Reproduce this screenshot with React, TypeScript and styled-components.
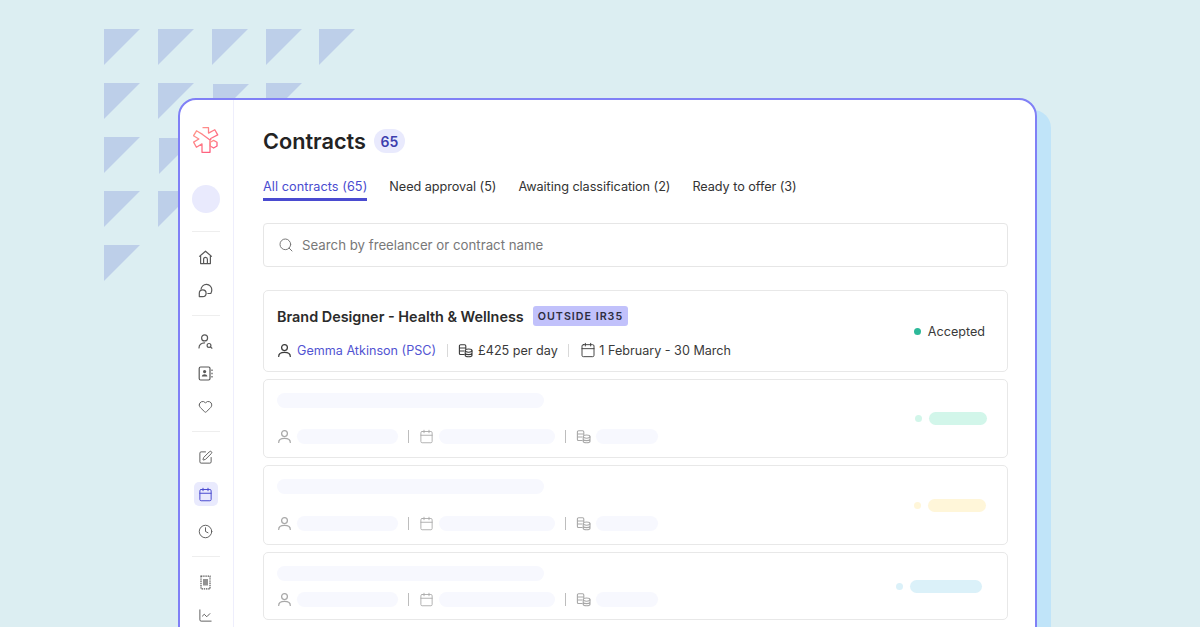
import React from 'react';
import styled, { createGlobalStyle } from 'styled-components';
import { Calendar, Clock, Heart, Search, SquarePen, ChartLine } from 'lucide-react';

const GlobalStyle = createGlobalStyle`
  html, body {
    margin: 0;
    padding: 0;
    background: #dceef2;
    font-family: Inter, "Liberation Sans", sans-serif;
  }
`;

const Page = styled.div`
  position: relative;
  width: 1200px;
  height: 627px;
  overflow: hidden;
  background: #dceef2;
  padding: 98px 0 0 178px;
  box-sizing: border-box;
`;

const Triangle = styled.div<{ $x: number; $y: number }>`
  position: absolute;
  left: ${(p) => p.$x}px;
  top: ${(p) => p.$y}px;
  width: 36px;
  height: 36px;
  background: #bdcfe9;
  clip-path: polygon(0 0, 100% 0, 0 100%);
`;

const Frame = styled.div`
  position: relative;
  display: flex;
  width: 859px;
  height: 600px;
  box-sizing: border-box;
  background: #fff;
  border: 2px solid #8080f6;
  border-radius: 18px;
  box-shadow: 14px 12px 0 #c0e4f9;
`;

const Sidebar = styled.aside`
  width: 54px;
  flex: none;
  box-sizing: border-box;
  border-right: 1px solid #eeeefc;
  display: flex;
  flex-direction: column;
  align-items: center;
  padding: 27px 2px 0 0;
`;

const LogoSlot = styled.div`
  height: 26px;
  margin-bottom: 32px;
  line-height: 0;
`;

const Avatar = styled.div`
  width: 28px;
  height: 28px;
  border-radius: 50%;
  background: #e9eafd;
  margin-bottom: 18px;
`;

const Divider = styled.div`
  width: 28px;
  height: 1px;
  background: #eeeeee;
  flex: none;
`;

const NavGroup = styled.div<{ $gap: number }>`
  display: flex;
  flex-direction: column;
  align-items: center;
  padding: 13px 0 13px;
  gap: ${(p) => p.$gap}px;
`;

const NavItem = styled.div<{ $active?: boolean }>`
  width: 24px;
  height: 24px;
  display: flex;
  align-items: center;
  justify-content: center;
  border-radius: 5px;
  color: ${(p) => (p.$active ? '#4a4bd0' : '#595959')};
  background: ${(p) => (p.$active ? '#e9eafd' : 'transparent')};
`;

const Main = styled.main`
  flex: 1;
  min-width: 0;
  padding: 29px 27px 0 29px;
`;

const Heading = styled.div`
  display: flex;
  align-items: center;
  gap: 8px;
  height: 24px;
`;

const Title = styled.h1`
  margin: 0;
  font-size: 21.7px;
  font-weight: 600;
  color: #232323;
  line-height: 24px;
`;

const CountBadge = styled.span`
  width: 31px;
  height: 24px;
  display: flex;
  align-items: center;
  justify-content: center;
  border-radius: 12px;
  background: #e9eafd;
  color: #3d3eae;
  font-size: 14px;
  font-weight: 600;
`;

const Tabs = styled.nav`
  display: flex;
  gap: 22px;
  margin-top: 23px;
`;

const Tab = styled.div<{ $active?: boolean }>`
  font-size: 12.7px;
  line-height: 20px;
  height: 25px;
  box-sizing: border-box;
  letter-spacing: ${(p) => (p.$active ? '0.06px' : '-0.06px')};
  color: ${(p) => (p.$active ? '#4a4bd0' : '#333')};
  padding: 1px 0;
  border-bottom: 3px solid ${(p) => (p.$active ? '#4a4bd0' : 'transparent')};
`;

const SearchBox = styled.div`
  display: flex;
  align-items: center;
  gap: 8px;
  height: 44px;
  box-sizing: border-box;
  margin-top: 22px;
  padding-left: 14px;
  border: 1px solid #e6e6e6;
  border-radius: 4px;
  color: #787878;
  font-size: 13.25px;
`;

const Cards = styled.div`
  display: flex;
  flex-direction: column;
  gap: 7px;
  margin-top: 23px;
`;

const Card = styled.article<{ $height: number }>`
  display: flex;
  align-items: center;
  justify-content: space-between;
  height: ${(p) => p.$height}px;
  box-sizing: border-box;
  border: 1px solid #e8e8e8;
  border-radius: 5px;
  padding: 0 13px;
`;

const CardBody = styled.div<{ $gap: number; $shift?: number }>`
  display: flex;
  flex-direction: column;
  gap: ${(p) => p.$gap}px;
  margin-top: ${(p) => p.$shift ?? 0}px;
`;

const TitleRow = styled.div`
  display: flex;
  align-items: center;
  gap: 9px;
  height: 20px;
`;

const CardTitle = styled.h2`
  margin: 0;
  font-size: 14.4px;
  font-weight: 600;
  color: #2b2b2b;
`;

const Ir35 = styled.span`
  display: flex;
  align-items: center;
  height: 20px;
  padding: 0 5px;
  border-radius: 3px;
  background: #c1c1fb;
  color: #2d2d40;
  font-size: 10.7px;
  font-weight: 600;
  letter-spacing: 1px;
`;

const Meta = styled.div`
  display: flex;
  align-items: center;
  height: 16px;
  font-size: 12.6px;
  color: #3a3a3a;
`;

const MetaItem = styled.span<{ $link?: boolean; $gap?: number }>`
  display: flex;
  align-items: center;
  gap: ${(p) => p.$gap ?? 5}px;
  color: ${(p) => (p.$link ? '#5254d2' : 'inherit')};
`;

const InkIcon = styled.span`
  display: flex;
  color: #3a3a3a;
`;

const Sep = styled.span<{ $ghost?: boolean }>`
  width: 1px;
  height: 13px;
  margin: 0 ${(p) => (p.$ghost ? 10 : 10.5)}px;
  background: ${(p) => (p.$ghost ? '#bdbdbd' : '#d9d9d9')};
`;

const GhostIcon = styled.span`
  display: flex;
  color: #a8a8a8;
`;

const Bone = styled.div<{ $w: number; $h?: number; $c?: string }>`
  width: ${(p) => p.$w}px;
  height: ${(p) => p.$h ?? 15}px;
  border-radius: 8px;
  background: ${(p) => p.$c ?? '#f7f8fe'};
`;

const Status = styled.div<{ $inset?: number }>`
  display: flex;
  align-items: center;
  gap: 7px;
  margin-right: ${(p) => p.$inset ?? 0}px;
  font-size: 12.6px;
  color: #3a3a3a;
`;

const Dot = styled.span<{ $c: string }>`
  width: 7px;
  height: 7px;
  border-radius: 50%;
  background: ${(p) => p.$c};
`;

const Logo = () => (
  <svg width="26" height="26" viewBox="0 0 26 26" fill="none">
    <defs>
      <linearGradient id="logoGrad" x1="0" y1="0" x2="1" y2="1">
        <stop offset="0" stopColor="#ff9f8e" />
        <stop offset="1" stopColor="#ff4f7b" />
      </linearGradient>
    </defs>
    <path
      d="M9.5 .7h6v5.4l6.3-3.4 2.9 5.2-7 3.6v1.4M17 13v12.3H9v-8.4l-5.6 3.3-2.8-5.1 5.3-3.1-5.4-3.2 3-5 6 3.6z"
      stroke="url(#logoGrad)"
      strokeWidth="1.3"
      strokeLinejoin="round"
    />
    <path d="M20.6 13.4l3.4 1.9v3.7l-3.4 2-3.4-2v-3.7z" stroke="url(#logoGrad)" strokeWidth="1.3" strokeLinejoin="round" />
  </svg>
);

const HomeIcon = () => (
  <svg width="15" height="15" viewBox="0 0 15 15" fill="none" stroke="currentColor" strokeWidth="1.2" strokeLinejoin="round">
    <path d="M1.2 6.6 7.5 1.2l6.3 5.4" />
    <path d="M2.6 5.6V13.6h9.8V5.6" />
    <path d="M5.6 13.6V9.2a1.9 1.9 0 0 1 3.8 0v4.4" />
  </svg>
);

const ChatBubbles = () => (
  <svg width="15" height="15" viewBox="0 0 15 15" fill="none" stroke="currentColor" strokeWidth="1.2" strokeLinejoin="round">
    <path d="M3 6.6A5.4 5.4 0 0 1 13.8 7c0 1.3-.4 2.4-1 3.5H9.4" />
    <path d="M1.3 13.6v-3.4a3.4 3.4 0 1 1 3.4 3.4z" />
  </svg>
);

const PersonSearch = () => (
  <svg width="15" height="15" viewBox="0 0 15 15" fill="none" stroke="currentColor" strokeWidth="1.2" strokeLinecap="round">
    <circle cx="6.6" cy="3.9" r="3" />
    <path d="M1 14c0-3.2 2.4-5.2 5.6-5.2" />
    <circle cx="11" cy="11.4" r="1.9" />
    <path d="M12.5 12.9l1.4 1.3" />
  </svg>
);

const AddressBook = () => (
  <svg width="15" height="15" viewBox="0 0 15 15" fill="none" stroke="currentColor" strokeWidth="1.2" strokeLinejoin="round">
    <rect x="1.2" y="1" width="10.8" height="13" rx="1.4" />
    <circle cx="6.6" cy="5.6" r="1.6" fill="currentColor" stroke="none" />
    <path d="M3.8 10.6c.2-1.6 1.4-2.4 2.8-2.4s2.6.8 2.8 2.4z" fill="currentColor" stroke="none" />
    <path d="M14 3.4v1.6M14 6.7v1.6M14 10v1.6" />
  </svg>
);

const Receipt = () => (
  <svg width="15" height="15" viewBox="0 0 15 15" fill="none" stroke="currentColor" strokeWidth="1.2">
    <path d="M3 1.2h9v12.6H3z" strokeDasharray="1.4 0.8" />
    <rect x="5" y="4" width="5" height="6.5" fill="currentColor" opacity="0.65" stroke="none" />
  </svg>
);

const Coins = () => (
  <svg width="15" height="15" viewBox="0 0 15 15" fill="none" stroke="currentColor" strokeWidth="1.1" strokeLinejoin="round">
    <path d="M6.6 11.5H2.4c-.6 0-1-.4-1-1V3c0-.8.6-1.2 1.2-1.2h4c.7 0 1.2.5 1.2 1.2v3" />
    <path d="M1.4 5h6.4M1.4 8h4.6" />
    <ellipse cx="10.6" cy="7.6" rx="3.4" ry="1.6" />
    <path d="M7.2 7.6v4.6c0 .9 1.5 1.6 3.4 1.6s3.4-.7 3.4-1.6V7.6M7.2 10c0 .9 1.5 1.6 3.4 1.6s3.4-.7 3.4-1.6" />
  </svg>
);

const Person = () => (
  <svg width="15" height="15" viewBox="0 0 15 15" fill="none" stroke="currentColor" strokeWidth="1.25" strokeLinecap="round">
    <circle cx="7.5" cy="4.6" r="2.9" />
    <path d="M1.7 13.4c0-2.8 2.4-4 5.8-4s5.8 1.2 5.8 4" />
  </svg>
);

const triangles = [
  [104, 29], [158, 29], [212, 29], [266, 29], [319, 29],
  [104, 83], [158, 83], [213, 84], [266, 83],
  [104, 137], [159, 138],
  [104, 191], [158, 191],
  [104, 245],
];

const navGroups = [
  { gap: 9, items: [{ icon: <HomeIcon /> }, { icon: <ChatBubbles /> }] },
  {
    gap: 8.5,
    items: [
      { icon: <PersonSearch /> },
      { icon: <AddressBook /> },
      { icon: <Heart size={15} strokeWidth={1.5} /> },
    ],
  },
  {
    gap: 13,
    items: [
      { icon: <SquarePen size={15} strokeWidth={1.5} /> },
      { icon: <Calendar size={15} strokeWidth={1.6} />, active: true },
      { icon: <Clock size={15} strokeWidth={1.5} /> },
    ],
  },
  { gap: 9, items: [{ icon: <Receipt /> }, { icon: <ChartLine size={15} strokeWidth={1.5} /> }] },
];

const skeletons = [
  { height: 79, gap: 21, shift: 0, color: '#d2f6ea', width: 58, inset: 7 },
  { height: 80, gap: 21, shift: 0, color: '#fff6d9', width: 58, inset: 8 },
  { height: 68, gap: 10, shift: 1, color: '#dbf1f9', width: 72, inset: 12 },
];

export default function App() {
  return (
    <Page>
      <GlobalStyle />
      {triangles.map(([x, y]) => (
        <Triangle key={`${x}-${y}`} $x={x} $y={y} />
      ))}
      <Frame>
        <Sidebar>
          <LogoSlot>
            <Logo />
          </LogoSlot>
          <Avatar />
          {navGroups.map((group, i) => (
            <React.Fragment key={i}>
              <Divider />
              <NavGroup $gap={group.gap}>
                {group.items.map((item, j) => (
                  <NavItem key={j} $active={item.active}>
                    {item.icon}
                  </NavItem>
                ))}
              </NavGroup>
            </React.Fragment>
          ))}
        </Sidebar>
        <Main>
          <Heading>
            <Title>Contracts</Title>
            <CountBadge>65</CountBadge>
          </Heading>
          <Tabs>
            <Tab $active>All contracts (65)</Tab>
            <Tab>Need approval (5)</Tab>
            <Tab>Awaiting classification (2)</Tab>
            <Tab>Ready to offer (3)</Tab>
          </Tabs>
          <SearchBox>
            <Search size={16} strokeWidth={1.5} />
            Search by freelancer or contract name
          </SearchBox>
          <Cards>
            <Card $height={82}>
              <CardBody $gap={16} $shift={2}>
                <TitleRow>
                  <CardTitle>Brand Designer - Health &amp; Wellness</CardTitle>
                  <Ir35>OUTSIDE IR35</Ir35>
                </TitleRow>
                <Meta>
                  <MetaItem $link>
                    <InkIcon>
                      <Person />
                    </InkIcon>
                    Gemma Atkinson (PSC)
                  </MetaItem>
                  <Sep />
                  <MetaItem>
                    <Coins />
                    £425 per day
                  </MetaItem>
                  <Sep />
                  <MetaItem $gap={3.5}>
                    <Calendar size={16} strokeWidth={1.4} />1 February - 30 March
                  </MetaItem>
                </Meta>
              </CardBody>
              <Status $inset={9}>
                <Dot $c="#2db999" />
                Accepted
              </Status>
            </Card>
            {skeletons.map((s, i) => (
              <Card key={i} $height={s.height}>
                <CardBody $gap={s.gap} $shift={s.shift}>
                  <Bone $w={267} />
                  <Meta>
                    <MetaItem>
                      <GhostIcon>
                        <Person />
                      </GhostIcon>
                      <Bone $w={101} />
                    </MetaItem>
                    <Sep $ghost />
                    <MetaItem>
                      <GhostIcon>
                        <Calendar size={15} strokeWidth={1.4} />
                      </GhostIcon>
                      <Bone $w={116} />
                    </MetaItem>
                    <Sep $ghost />
                    <MetaItem>
                      <GhostIcon>
                        <Coins />
                      </GhostIcon>
                      <Bone $w={62} />
                    </MetaItem>
                  </Meta>
                </CardBody>
                <Status $inset={s.inset}>
                  <Dot $c={s.color} />
                  <Bone $w={s.width} $h={13} $c={s.color} />
                </Status>
              </Card>
            ))}
          </Cards>
        </Main>
      </Frame>
    </Page>
  );
}
